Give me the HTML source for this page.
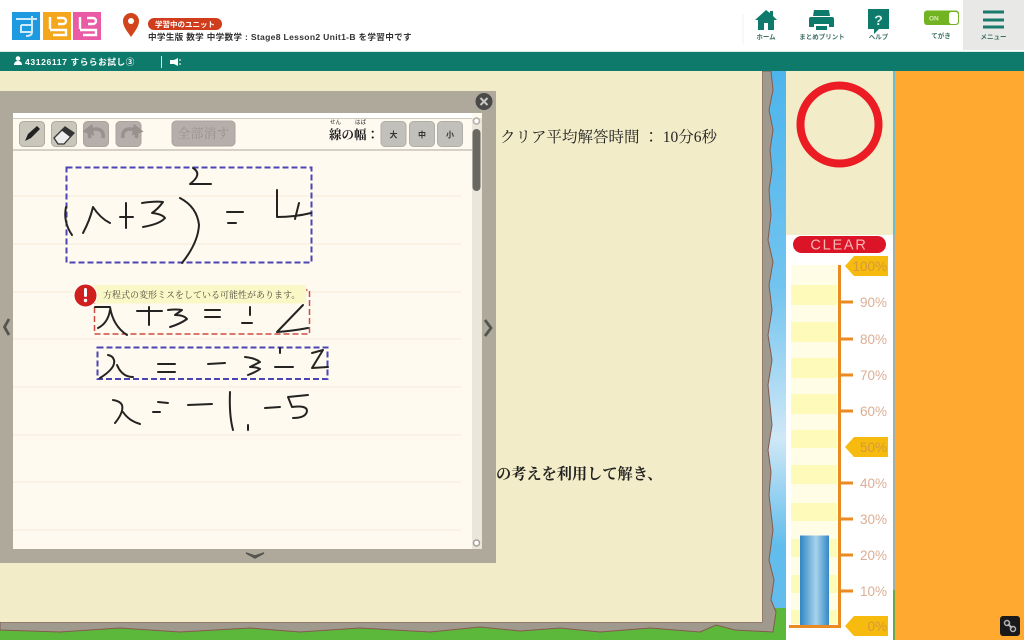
<!DOCTYPE html>
<html lang="ja"><head><meta charset="utf-8"><style>
html,body{margin:0;padding:0;width:1024px;height:640px;overflow:hidden;background:#f3ecc8}
svg{display:block;position:absolute;left:0;top:0}
text{font-family:"Liberation Sans","Noto Sans CJK JP",sans-serif}
.s{font-family:"Liberation Serif","Noto Serif CJK SC",serif}
.ink{fill:none;stroke:#232321;stroke-width:2;stroke-linecap:round;stroke-linejoin:round}
</style></head><body>
<svg width="1024" height="640" viewBox="0 0 1024 640" xmlns="http://www.w3.org/2000/svg">
<defs>
<linearGradient id="sky" x1="0" y1="0" x2="0" y2="1"><stop offset="0" stop-color="#4db5ec"/><stop offset=".4" stop-color="#72c4ef"/><stop offset=".68" stop-color="#cfe8f6"/><stop offset=".88" stop-color="#62bdec"/><stop offset="1" stop-color="#62bdec"/></linearGradient>
<linearGradient id="bar" x1="0" y1="0" x2="1" y2="0"><stop offset="0" stop-color="#2f86c4"/><stop offset=".55" stop-color="#a9d3ec"/><stop offset="1" stop-color="#3288c6"/></linearGradient>
</defs>
<rect width="1024" height="640" fill="#f3ecc8"/>
<!-- world -->
<rect x="762" y="71" width="24" height="540" fill="url(#sky)"/>
<rect x="762" y="608" width="24" height="32" fill="#5cb83a"/>
<rect x="0" y="622" width="786" height="18" fill="#5cb83a"/>
<path d="M0 622H762V71H771L773 90L769 110L773 130L770 150L772 170L769 190L771 215L768 240L773 262L769 285L772 310L768 335L772 360L768 385L772 425L768 450L771 472L769 495L773 530L769 560L774 580L771 600L776 612L773 632L735 630L716 625L700 632L650 628L600 632L560 628L520 631L480 627L430 632L360 628L300 632L250 628L180 632L120 628L60 632L0 630Z" fill="#a09a8e" stroke="#86594f" stroke-width="1"/>
<rect x="0" y="71" width="762" height="551" fill="#f3ecc8"/>
<!-- right column -->
<rect x="786" y="71" width="107" height="165" fill="#f3ecc8"/>
<rect x="786" y="235" width="107" height="405" fill="#fff"/>
<rect x="893" y="71" width="2" height="164" fill="#6cbcd0"/>
<rect x="893" y="235" width="2" height="355" fill="#9fb0a8"/>
<rect x="893" y="590" width="2" height="50" fill="#6ba84a"/>
<rect x="895" y="71" width="129" height="569" fill="#ffa931"/>
<circle cx="839.500" cy="124.500" r="39" fill="none" stroke="#ec1c24" stroke-width="8"/>
<rect x="793" y="236" width="93" height="17" rx="8.500" fill="#dc1428"/>
<text x="839" y="249.500" font-size="14.500" fill="#f5b8b4" text-anchor="middle" letter-spacing="1.800">CLEAR</text>
<g fill="#fffde6"><rect x="791" y="265" width="46" height="360"/></g>
<g fill="#fdf9a8" opacity=".7"><rect x="791" y="285" width="46" height="20"/><rect x="791" y="322" width="46" height="20"/><rect x="791" y="358" width="46" height="20"/><rect x="791" y="394" width="46" height="20"/><rect x="791" y="430" width="46" height="18"/><rect x="791" y="465" width="46" height="19"/><rect x="791" y="503" width="46" height="18"/><rect x="791" y="539" width="46" height="18"/><rect x="791" y="575" width="46" height="18"/><rect x="791" y="610" width="46" height="14"/></g>
<rect x="800" y="535.500" width="29" height="90" fill="url(#bar)"/>
<path d="M839.500 265V626M789 626.500H841" stroke="#e98a23" stroke-width="3" fill="none"/>
<path d="M841 302h12M841 339h12M841 375h12M841 411h12M841 483h12M841 519h12M841 555h12M841 591h12" stroke="#e98a23" stroke-width="3"/>
<path d="M845 266L854 256H888V276H854Z M845 447L854 437H888V457H854Z M845 626L854 616H888V636H854Z" fill="#f6bb0e"/>
<g font-size="13.500" fill="#dcae94" text-anchor="end">
<text x="887" y="271" fill="#d49a38">100%</text><text x="887" y="307">90%</text><text x="887" y="344">80%</text><text x="887" y="380">70%</text><text x="887" y="416">60%</text><text x="887" y="452" fill="#d49a38">50%</text><text x="887" y="488">40%</text><text x="887" y="524">30%</text><text x="887" y="560">20%</text><text x="887" y="596">10%</text><text x="887" y="631" fill="#d49a38">0%</text>
</g>
<!-- question text -->
<text class="s" x="500" y="142" font-size="15.500" fill="#222">クリア平均解答時間 ： 10分6秒</text>
<text class="s" x="496" y="479" font-size="15.200" fill="#222" font-weight="700">の考えを利用して解き、</text>
<!-- popup -->
<rect x="0" y="91" width="496" height="472" fill="#aea99b"/>
<rect x="13" y="113" width="469" height="436" fill="#fffaf0"/>
<rect x="13" y="113" width="459" height="5" fill="#fff"/>
<rect x="13" y="118" width="459" height="1" fill="#cfcbc0"/>
<rect x="13" y="149" width="459" height="2" fill="#d5d1c6"/>
<rect x="472" y="118" width="10" height="431" fill="#ebe6db"/>
<circle cx="476.500" cy="121" r="3" fill="#fff" stroke="#b2aea4" stroke-width="1.500"/>
<rect x="472.500" y="129" width="8" height="62" rx="4" fill="#6a6862"/>
<circle cx="476.500" cy="543" r="3" fill="#fff" stroke="#a5a197" stroke-width="1.500"/>
<g fill="none" stroke="#f6eddd" stroke-width="1.300"><path d="M13 196H461M13 244H461M13 292H461M13 339H461M13 387H461M13 435H461M13 482H461M13 530H461"/></g>
<circle cx="484" cy="101.500" r="8.500" fill="#4a4a48"/>
<path d="M480.500 98l7 7M487.500 98l-7 7" stroke="#c8c8c4" stroke-width="2"/>
<path d="M9 319L4.500 327L9 335" fill="none" stroke="#555550" stroke-width="2.800"/>
<path d="M485 320L491 328L485 336" fill="none" stroke="#555550" stroke-width="2.800"/>
<path d="M246 553l9 5 9-5-9 3z" fill="#55544e" stroke="#55544e" stroke-width="1.500"/>
<!-- tools -->
<g fill="#c9c6bc" stroke="#aeaa9f" stroke-width="1">
<rect x="19.500" y="121.500" width="25" height="25" rx="4"/><rect x="51.500" y="121.500" width="25" height="25" rx="4"/>
</g>
<g fill="#b5aeaa" stroke="#a9a39e" stroke-width="1">
<rect x="83.500" y="121.500" width="25" height="25" rx="4"/><rect x="116" y="121.500" width="25" height="25" rx="4"/><rect x="172" y="121" width="63" height="25" rx="4"/>
</g>
<path d="M25 141l3-7 9-8 3 3-9 9z" fill="#222"/>
<path d="M54 138l11-11 9 6-10 11h-6z" fill="#eee" stroke="#333" stroke-width="1.300"/>
<path d="M61 130l4-3 9 6-4 4z" fill="#333"/>
<path d="M90 138c-2-6 1-9 6-9 5 0 8 3 7 9M86 131l5-4 1 6z" fill="none" stroke="#98928e" stroke-width="3.500"/>
<path d="M136 138c2-6-1-9-6-9-5 0-8 3-7 9M140 131l-5-4-1 6z" fill="none" stroke="#98928e" stroke-width="3.500"/>
<text x="203.500" y="138" font-size="13" fill="#989490" text-anchor="middle" class="s">全部消す</text>
<text x="329" y="139" font-size="12.500" fill="#1e1e1e" font-weight="700" class="s">線の幅：</text>
<text x="330" y="124" font-size="5.500" fill="#222">せん</text><text x="355" y="124" font-size="5.500" fill="#222">はば</text>
<g fill="#c2c0ba" stroke="#b0aea8"><rect x="381" y="121.500" width="25" height="25" rx="4"/><rect x="409.500" y="121.500" width="25" height="25" rx="4"/><rect x="437.500" y="121.500" width="25" height="25" rx="4"/></g>
<g font-size="8" fill="#333" text-anchor="middle" font-weight="700"><text x="393.500" y="137.500">大</text><text x="422" y="137.500">中</text><text x="450" y="137.500">小</text></g>
<!-- dashed boxes -->
<rect x="66.500" y="167.500" width="245" height="95" fill="none" stroke="#4c44b4" stroke-width="2" stroke-dasharray="6 3"/>
<rect x="94.500" y="290" width="215" height="44" fill="none" stroke="#cf4a42" stroke-width="1.500" stroke-dasharray="6 3"/>
<rect x="97.500" y="347.500" width="230" height="31.500" fill="none" stroke="#4c44b4" stroke-width="2" stroke-dasharray="6 3"/>
<!-- warning -->
<rect x="90" y="285" width="216" height="18.500" fill="#fbf8c8"/>
<text class="s" x="103" y="298" font-size="9" fill="#4b4638">方程式の変形ミスをしている可能性があります。</text>
<!-- handwriting -->
<g class="ink">
<path d="M193 168Q203 174 190 184H211"/>
<path d="M66 207Q63 222 72 235"/>
<path d="M83 233Q90 220 93 207Q100 218 110 223"/>
<path d="M126 203V228M120 217H133"/>
<path d="M142 203Q155 201 163 202Q158 209 152 213Q162 214 165 218Q160 224 143 227"/>
<path d="M180 198Q197 207 199 225Q198 243 182 263"/>
<path d="M227 212H243M228 223H236"/>
<path d="M277 190V217Q295 217 311 213M299 203L295 219"/>
<path d="M95 307H110Q113 326 127 335M110 310Q108 323 98 328"/>
<path d="M137 311H162M149 307V325"/>
<path d="M168 310Q176 309 182 310L175 315Q184 315 187 319Q180 324 170 327"/>
<path d="M205 310H220M205 317H220"/>
<path d="M250 307V315M242 323H252"/>
<path d="M303 305L277 332Q292 331 308 328"/>
<path d="M108 355Q113 356 114 360Q116 368 100 378M117 365Q122 377 133 377"/>
<path d="M158 364H175M158 372H175"/>
<path d="M208 364L225 363"/>
<path d="M245 357Q255 358 260 362L250 367Q257 367 260 369Q256 372 248 375"/>
<path d="M280 348V353M275 367H293"/>
<path d="M312 353L323 350L312 368L328 367"/>
<path d="M113 400Q120 401 122 405Q124 412 115 423M123 412Q129 421 140 424"/>
<path d="M158 402L168 403M153 412H160"/>
<path d="M188 405L212 404"/>
<path d="M230 392Q229 415 233 430"/>
<path d="M248 425V430"/>
<path d="M265 408L280 407"/>
<path d="M288 397L308 395M288 397L292 407Q307 405 307 411Q306 418 293 418"/>
</g>
<circle cx="85.500" cy="295.500" r="11.500" fill="#d0201e" stroke="#fff" stroke-width="1"/>
<rect x="84" y="288" width="3" height="9" rx="1.500" fill="#fff"/><circle cx="85.500" cy="300.500" r="1.700" fill="#fff"/>
<!-- header -->
<rect width="1024" height="51" fill="#fff"/>
<rect y="51" width="1024" height="1" fill="#d7ece6"/>
<rect y="52" width="1024" height="19" fill="#0e7a6b"/>
<rect x="963" y="0" width="61" height="50" fill="#e8e8e6"/>
<rect x="12" y="12" width="28" height="28" fill="#1e9be0"/><rect x="43" y="12" width="28" height="28" fill="#f4a61d"/><rect x="73" y="12" width="28" height="28" fill="#ea5aa5"/>
<path d="M16 19H37M21 25H32M21 25V32H32M32 16V32Q32 36 26 36" fill="none" stroke="#cfeafa" stroke-width="2"/>
<path d="M50 17V29M57 18H63A3 3 0 0 1 63 24H58M50 30H66V35H53" fill="none" stroke="#fff" stroke-width="2.400"/>
<path d="M80 17V29M87 18H93A3 3 0 0 1 93 24H88M80 30H96V35H83" fill="none" stroke="#fff" stroke-width="2.400"/>
<path d="M131 37c-5-7-8-11-8-16a8 8 0 0 1 16 0c0 5-3 9-8 16z" fill="#d1441c"/><circle cx="131" cy="21" r="3" fill="#fff"/>
<rect x="148" y="18" width="74" height="12" rx="6" fill="#cf3d1c"/>
<text x="185" y="27" font-size="7.500" fill="#fff" font-weight="700" text-anchor="middle">学習中のユニット</text>
<text x="148" y="40" font-size="8.600" fill="#333" font-weight="700" letter-spacing=".3">中学生版 数学 中学数学 : Stage8 Lesson2 Unit1-B を学習中です</text>
<!-- nav icons -->
<path d="M766 10l-11 10h3v10h6v-7h4v7h6V20h3l-4-4V11h-3v2z" fill="#0e7a6b"/>
<path d="M814 10h15l1 6h-17z M811 17h21a2 2 0 0 1 2 2v8h-5v-3h-15v3h-5v-8a2 2 0 0 1 2-2z M816 26h11v4h-11z" fill="#0e7a6b"/>
<path d="M868 9h21v20h-10l-5 5v-5h-6z" fill="#0e7a6b"/>
<text x="878.500" y="25" font-size="14" font-weight="700" fill="#d9efe9" text-anchor="middle">?</text>
<g font-size="6.500" fill="#3d6f66" text-anchor="middle" font-weight="700"><text x="766" y="39">ホーム</text><text x="822" y="39">まとめプリント</text><text x="878.500" y="39">ヘルプ</text><text x="941" y="38">てがき</text><text x="993.500" y="39">メニュー</text></g>
<rect x="924" y="10.500" width="35" height="14.500" rx="3" fill="#72b322"/>
<rect x="949" y="12" width="9" height="12" rx="2.500" fill="#fff"/>
<text x="929" y="20.500" font-size="6.500" fill="#d6eeb0" font-weight="700">ON</text>
<path d="M983 12h21M983 20h21M983 27h21" stroke="#1a7b6c" stroke-width="3"/>
<path d="M743 14v30" stroke="#f2f2f2"/>
<!-- user bar -->
<circle cx="18" cy="58.500" r="2.300" fill="#fff"/><path d="M14 65c0-3 2-4 4-4s4 1 4 4z" fill="#fff"/>
<text x="25" y="65" font-size="8.600" fill="#fff" font-weight="700" letter-spacing=".6">43126117 すららお試し③</text>
<rect x="161" y="56" width="1" height="12" fill="#d7ece6"/>
<path d="M170 60h4l4-2v8l-4-2h-4z" fill="#fff"/><path d="M179 60h2M179 64h2" stroke="#fff"/>
<!-- corner -->
<rect x="1000" y="616" width="20" height="20" rx="3" fill="#1a1a1a"/>
<path d="M1008 624l4 4" stroke="#b5b5b5" stroke-width="2"/>
<circle cx="1007" cy="623" r="2.500" fill="none" stroke="#b5b5b5" stroke-width="1.500"/><circle cx="1013" cy="629" r="2.500" fill="none" stroke="#b5b5b5" stroke-width="1.500"/>
</svg>
</body></html>
